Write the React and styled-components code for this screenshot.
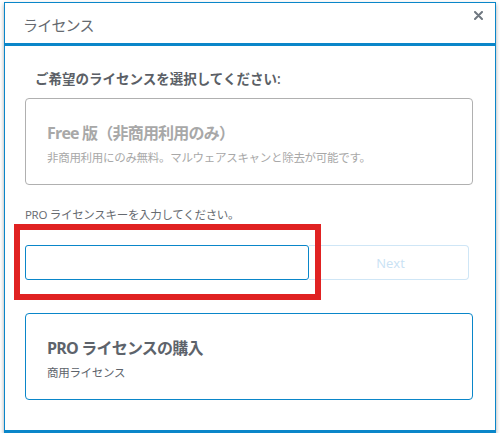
import React from 'react'
import styled, { createGlobalStyle } from 'styled-components'

const GlobalStyle = createGlobalStyle`
  html, body {
    margin: 0;
    padding: 0;
    background: #ffffff;
  }
  body {
    font-family: "Open Sans", "Noto Sans CJK JP", sans-serif;
  }
`

export default function App() {
  return (
    <>
      <GlobalStyle />
      <Dialog>
        <Header>
          <HeaderTitle>ライセンス</HeaderTitle>
          <CloseButton aria-label="close">
            <svg width="9" height="9" viewBox="0 0 9 9">
              <path d="M1 1 L8 8 M8 1 L1 8" stroke="#6f7780" strokeWidth="2" strokeLinecap="round" />
            </svg>
          </CloseButton>
        </Header>
        <Body>
          <SectionTitle>ご希望のライセンスを選択してください:</SectionTitle>
          <OptionCard disabled>
            <CardTitle disabled>Free 版（非商用利用のみ）</CardTitle>
            <CardDesc disabled>非商用利用にのみ無料。マルウェアスキャンと除去が可能です。</CardDesc>
          </OptionCard>
          <KeyLabel>PRO ライセンスキーを入力してください。</KeyLabel>
          <KeyRow>
            <KeyInput type="text" />
            <NextButton disabled>Next</NextButton>
            <Highlight />
          </KeyRow>
          <OptionCard>
            <CardTitle>PRO ライセンスの購入</CardTitle>
            <CardDesc>商用ライセンス</CardDesc>
          </OptionCard>
        </Body>
      </Dialog>
    </>
  )
}

const Dialog = styled.div`
  margin: 2px 4px 0 4px;
  width: 490px;
  border: 1px solid #0a86c9;
  border-bottom: 3px solid #0a86c9;
  box-shadow: 0 2px 4px rgba(0, 0, 0, 0.35);
  background: #fff;
`

const Header = styled.div`
  display: flex;
  align-items: center;
  justify-content: space-between;
  padding: 0 0 0 18px;
  border-bottom: 3px solid #0a86c9;
  box-sizing: border-box;
  height: 43px;
`

const HeaderTitle = styled.div`
  font-size: 15px;
  letter-spacing: -0.8px;
  color: #666a70;
  margin-top: 2px;
`

const CloseButton = styled.button`
  align-self: flex-start;
  margin: 8px 12px 0 0;
  padding: 0;
  border: 0;
  background: none;
  display: flex;
`

const Body = styled.div`
  padding: 23px 22px 30px 20px;
  display: flex;
  flex-direction: column;
`

const SectionTitle = styled.div`
  font-size: 13.5px;
  line-height: 20px;
  font-weight: 600;
  color: #5b5f66;
  padding-left: 10px;
  margin-bottom: 9px;
`

const OptionCard = styled.div`
  border: 1px solid ${(p) => (p.disabled ? '#b0b0b0' : '#0a86c9')};
  border-radius: 4px;
  padding: 22px 21px 17px 21px;
  display: flex;
  flex-direction: column;
  gap: 4px;
  cursor: ${(p) => (p.disabled ? 'default' : 'pointer')};
`

const CardTitle = styled.div`
  font-size: 16px;
  line-height: 24px;
  font-weight: 700;
  letter-spacing: -0.8px;
  color: ${(p) => (p.disabled ? '#a8a8a8' : '#5d636b')};
`

const CardDesc = styled.div`
  font-size: 11.5px;
  line-height: 18px;
  letter-spacing: -0.3px;
  color: ${(p) => (p.disabled ? '#a8a8a8' : '#5d636b')};
`

const KeyLabel = styled.div`
  font-size: 11.5px;
  line-height: 18px;
  letter-spacing: -0.3px;
  color: #666a70;
  margin-top: 21px;
  margin-bottom: 21px;
`

const KeyRow = styled.div`
  position: relative;
  display: flex;
  margin-bottom: 33px;
`

const KeyInput = styled.input`
  width: 284px;
  height: 35px;
  box-sizing: border-box;
  border: 1px solid #0a86c9;
  border-radius: 3px;
  outline: none;
  padding: 0 8px;
  font-size: 13px;
`

const NextButton = styled.button`
  width: 160px;
  height: 35px;
  box-sizing: border-box;
  border: 1px solid #cfe6f6;
  border-left: none;
  border-radius: 0 4px 4px 0;
  background: #fff;
  color: #c9e2f4;
  font-family: "Open Sans", sans-serif;
  font-size: 13px;
  padding-left: 10px;
`

const Highlight = styled.div`
  position: absolute;
  left: -11px;
  top: -21px;
  width: 295px;
  height: 64px;
  border: 6px solid #e02222;
  pointer-events: none;
`
